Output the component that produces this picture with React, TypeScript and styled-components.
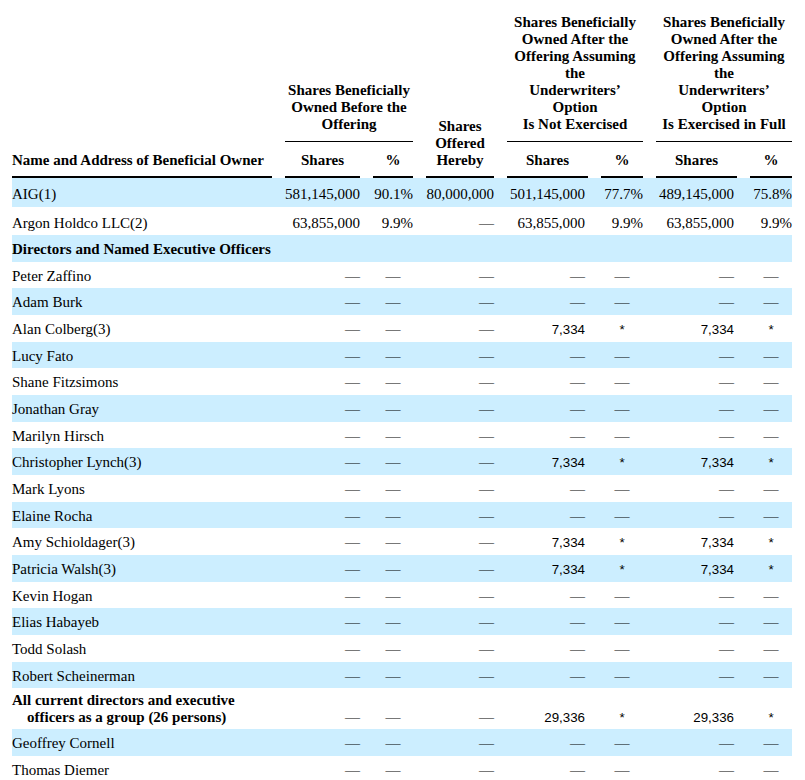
import React from "react";
import styled, { createGlobalStyle } from "styled-components";

const GlobalStyle = createGlobalStyle`
    body {
        margin: 0;
        background: #ffffff;
        color: #000000;
        font-family: "Liberation Serif", "Times New Roman", serif;
        font-size: 15px;
        line-height: 17px;
    }
`

const COLUMNS = "260px 75px 40px 68px 81px 42px 81px 42px";

const Page = styled.div`
    padding: 14px 12px 0 12px;
    width: 780px;
`
const HeadGrid = styled.div`
    display: grid;
    grid-template-columns: ${COLUMNS};
    grid-template-rows: auto auto;
    column-gap: 13px;
`
const HeadCell = styled.div<{ $col: string; $row: string; $rule: "thin" | "thick"; $left?: boolean }>`
    grid-column: ${p => p.$col};
    grid-row: ${p => p.$row};
    align-self: end;
    font-weight: 700;
    text-align: ${p => (p.$left ? "left" : "center")};
    padding-top: ${p => (p.$rule === "thick" ? "9.5px" : "0")};
    padding-bottom: ${p => (p.$rule === "thick" ? "7.5px" : "8px")};
    border-bottom: ${p => (p.$rule === "thick" ? "2px" : "1px")} solid #000;
`
const Row = styled.div<{ $shaded: boolean; $tall?: boolean }>`
    display: grid;
    grid-template-columns: ${COLUMNS};
    column-gap: 13px;
    align-items: end;
    box-sizing: border-box;
    min-height: ${p => (p.$tall ? "28.5px" : "26.67px")};
    padding: 3.5px 0;
    background: ${p => (p.$shaded ? "#cceeff" : "transparent")};
`
const NameCell = styled.div<{ $bold?: boolean }>`
    font-weight: ${p => (p.$bold ? 700 : 400)};
    padding-left: 15px;
    text-indent: -15px;
`
const SectionCell = styled.div`
    grid-column: 1 / -1;
    font-weight: 700;
`
const ValueCell = styled.div<{ $align: "right" | "center"; $padRight?: number }>`
    text-align: ${p => p.$align};
    padding-right: ${p => p.$padRight ?? 0}px;
    white-space: nowrap;
`
const SansValue = styled.span`
    font-family: "Liberation Sans", Arial, sans-serif;
    font-size: 13.33px;
`

type Entry = {
    name: string;
    values?: string[];
    bold?: boolean;
    section?: boolean;
    sans?: boolean;
    tall?: boolean;
};

const D = "—";
const NONE = [D, D, D, D, D, D, D];
const HELD = [D, D, D, "7,334", "*", "7,334", "*"];

const entries: Entry[] = [
    { name: "AIG(1)", values: ["581,145,000", "90.1%", "80,000,000", "501,145,000", "77.7%", "489,145,000", "75.8%"], tall: true },
    { name: "Argon Holdco LLC(2)", values: ["63,855,000", "9.9%", D, "63,855,000", "9.9%", "63,855,000", "9.9%"], tall: true },
    { name: "Directors and Named Executive Officers", section: true },
    { name: "Peter Zaffino", values: NONE },
    { name: "Adam Burk", values: NONE },
    { name: "Alan Colberg(3)", values: HELD, sans: true },
    { name: "Lucy Fato", values: NONE },
    { name: "Shane Fitzsimons", values: NONE },
    { name: "Jonathan Gray", values: NONE },
    { name: "Marilyn Hirsch", values: NONE },
    { name: "Christopher Lynch(3)", values: HELD, sans: true },
    { name: "Mark Lyons", values: NONE },
    { name: "Elaine Rocha", values: NONE },
    { name: "Amy Schioldager(3)", values: HELD, sans: true },
    { name: "Patricia Walsh(3)", values: HELD, sans: true },
    { name: "Kevin Hogan", values: NONE },
    { name: "Elias Habayeb", values: NONE },
    { name: "Todd Solash", values: NONE },
    { name: "Robert Scheinerman", values: NONE },
    { name: "All current directors and executive officers as a group (26 persons)", values: [D, D, D, "29,336", "*", "29,336", "*"], bold: true, sans: true },
    { name: "Geoffrey Cornell", values: NONE },
    { name: "Thomas Diemer", values: NONE },
];

// percent columns are 1, 4 and 6; the after-offering share columns sit a little in
const PCT_COLS = [1, 4, 6];
const PAD_COLS = [3, 5];

const Value = ({ value, index, sans }: { value: string; index: number; sans?: boolean }) => {
    const isPct = PCT_COLS.includes(index);
    const align = isPct && !value.endsWith("%") ? "center" : "right";
    return (
        <ValueCell $align={align} $padRight={PAD_COLS.includes(index) ? 3 : 0}>
            {sans && value !== D ? <SansValue>{value}</SansValue> : value}
        </ValueCell>
    );
};

export default function App() {
    return (
        <Page>
            <GlobalStyle />
            <HeadGrid>
                <HeadCell $col="1" $row="1 / 3" $rule="thick" $left>Name and Address of Beneficial Owner</HeadCell>
                <HeadCell $col="2 / 4" $row="1" $rule="thin">
                    Shares Beneficially<br />Owned Before the<br />Offering
                </HeadCell>
                <HeadCell $col="2" $row="2" $rule="thick">Shares</HeadCell>
                <HeadCell $col="3" $row="2" $rule="thick">%</HeadCell>
                <HeadCell $col="4" $row="1 / 3" $rule="thick">
                    Shares<br />Offered<br />Hereby
                </HeadCell>
                <HeadCell $col="5 / 7" $row="1" $rule="thin">
                    Shares Beneficially<br />Owned After the<br />Offering Assuming<br />the<br />Underwriters’<br />Option<br />Is Not Exercised
                </HeadCell>
                <HeadCell $col="5" $row="2" $rule="thick">Shares</HeadCell>
                <HeadCell $col="6" $row="2" $rule="thick">%</HeadCell>
                <HeadCell $col="7 / 9" $row="1" $rule="thin">
                    Shares Beneficially<br />Owned After the<br />Offering Assuming<br />the<br />Underwriters’<br />Option<br />Is Exercised in Full
                </HeadCell>
                <HeadCell $col="7" $row="2" $rule="thick">Shares</HeadCell>
                <HeadCell $col="8" $row="2" $rule="thick">%</HeadCell>
            </HeadGrid>
            {entries.map((e, i) => (
                <Row key={e.name} $shaded={i % 2 === 0} $tall={e.tall}>
                    {e.section ? (
                        <SectionCell>{e.name}</SectionCell>
                    ) : (
                        <>
                            <NameCell $bold={e.bold}>{e.name}</NameCell>
                            {e.values?.map((v, j) => (
                                <Value key={j} value={v} index={j} sans={e.sans} />
                            ))}
                        </>
                    )}
                </Row>
            ))}
        </Page>
    );
}
